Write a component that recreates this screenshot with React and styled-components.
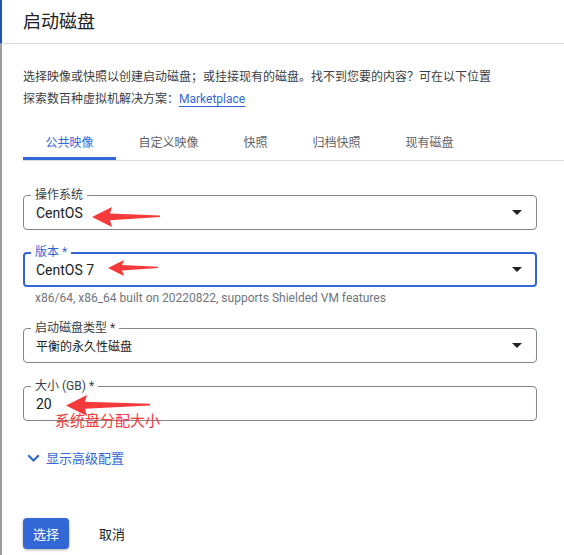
import React from 'react';
import styled, { createGlobalStyle } from 'styled-components';

const GlobalStyle = createGlobalStyle`
  body {
    margin: 0;
    background: #fff;
    font-family: Roboto, "Noto Sans CJK SC", sans-serif;
  }
`;

const tabs = ['公共映像', '自定义映像', '快照', '归档快照', '现有磁盘'];

// red hand-drawn style annotation arrow, tip on the left
const RedArrow = ({ w, h, left, top }) => (
    <ArrowBox style={{ left, top }} width={w} height={h} viewBox={`0 0 ${w} ${h}`}>
        <path
            d={`M0 ${h / 2} L${h} 0 L${h - 2} ${h * 0.32} L${w} ${h * 0.42} L${w} ${h * 0.5} L${h - 2} ${h * 0.66} L${h} ${h} Z`}
            fill="#f43a3a"
        />
    </ArrowBox>
);

const Caret = () => (
    <svg width="10" height="5" viewBox="0 0 10 5">
        <path d="M0 0 L10 0 L5 5 Z" fill="#202124" />
    </svg>
);

const App = () => {
    return (
        <>
            <GlobalStyle />
            <Page>
                <Header>启动磁盘</Header>
                <Body>
                    <Desc>
                        选择映像或快照以创建启动磁盘；或挂接现有的磁盘。找不到您要的内容？可在以下位置探索数百种虚拟机解决方案：<Link>Marketplace</Link>
                    </Desc>

                    <Tabs>
                        {tabs.map((t, i) => (
                            <Tab key={t} active={i === 0}>{t}</Tab>
                        ))}
                    </Tabs>

                    <Field>
                        <Label>操作系统</Label>
                        <Value>CentOS</Value>
                        <Caret />
                        <RedArrow w={68} h={20} left={68} top={11} />
                    </Field>

                    <Field focused>
                        <Label focused>版本 *</Label>
                        <Value>CentOS 7</Value>
                        <Caret />
                        <RedArrow w={50} h={16} left={83} top={6} />
                    </Field>
                    <Helper>x86/64, x86_64 built on 20220822, supports Shielded VM features</Helper>

                    <Field gap={23}>
                        <Label>启动磁盘类型 *</Label>
                        <Value cjk>平衡的永久性磁盘</Value>
                        <Caret />
                    </Field>

                    <Field gap={23}>
                        <Label>大小 (GB) *</Label>
                        <Value>20</Value>
                        <RedArrow w={84} h={21} left={42} top={8} />
                        <Note>系统盘分配大小</Note>
                    </Field>

                    <Advanced>
                        <svg width="13" height="8" viewBox="0 0 13 8">
                            <polyline points="1.2,1.2 6.5,6.5 11.8,1.2" fill="none" stroke="#3367d6" strokeWidth="2.2" />
                        </svg>
                        显示高级配置
                    </Advanced>

                    <Actions>
                        <PrimaryButton>选择</PrimaryButton>
                        <TextButton>取消</TextButton>
                    </Actions>
                </Body>
            </Page>
        </>
    );
};

export default App;

const Page = styled.div`
width: 564px;
height: 555px;
overflow: hidden;
display: flex;
flex-direction: column;
`;

const Header = styled.div`
height: 44px;
box-sizing: border-box;
flex-shrink: 0;
display: flex;
align-items: center;
padding: 0 0 4px 21px;
border-left: 2px solid #1a56b0;
border-bottom: 1px solid #dadce0;
font-size: 18px;
color: #202124;
`;

const Body = styled.div`
flex: 1;
border-left: 2px solid #9e9e9e;
padding: 0 27px 0 21px;
display: flex;
flex-direction: column;
`;

const Desc = styled.div`
margin-top: 22px;
max-width: 475px;
font-size: 12px;
line-height: 22px;
color: #3c4043;
`;

const Link = styled.span`
color: #3367d6;
text-decoration: underline;
text-underline-offset: 3px;
`;

const Tabs = styled.div`
display: flex;
margin-top: 13px;
margin-right: -27px;
border-bottom: 1px solid #dadce0;
`;

const Tab = styled.div`
height: 37px;
padding: 0 22.5px;
display: flex;
align-items: center;
font-size: 12px;
color: ${p => (p.active ? '#3367d6' : '#5f6368')};
box-shadow: ${p => (p.active ? 'inset 0 -3px 0 #3367d6' : 'none')};
`;

const Field = styled.div`
position: relative;
height: 35px;
box-sizing: border-box;
margin-top: ${p => (p.gap ? p.gap : p.focused ? 22 : 34)}px;
padding: 0 ${p => (p.focused ? 13 : 14)}px 0 ${p => (p.focused ? 11 : 12)}px;
border: ${p => (p.focused ? '2px solid #3367d6' : '1px solid #80868b')};
border-radius: 4px;
display: flex;
align-items: center;
justify-content: space-between;
`;

const Label = styled.span`
position: absolute;
top: ${p => (p.focused ? -9 : -8)}px;
left: ${p => (p.focused ? 6 : 7)}px;
padding: 0 4px;
background: #fff;
font-size: 12px;
line-height: 14px;
color: ${p => (p.focused ? '#3367d6' : '#3c4043')};
`;

const Value = styled.span`
font-size: ${p => (p.cjk ? 12 : 14)}px;
color: #202124;
`;

const Helper = styled.div`
margin-top: 4px;
padding-left: 12px;
font-size: 12px;
line-height: 14px;
color: #70757a;
`;

const ArrowBox = styled.svg`
position: absolute;
pointer-events: none;
`;

const Note = styled.span`
position: absolute;
left: 31px;
top: 25px;
font-size: 15px;
line-height: 18px;
color: #f43a3a;
`;

const Advanced = styled.div`
margin-top: 27px;
display: flex;
align-items: center;
gap: 6px;
padding-left: 4px;
font-size: 13px;
color: #3367d6;
`;

const Actions = styled.div`
margin-top: 51px;
display: flex;
align-items: center;
gap: 16px;
`;

const PrimaryButton = styled.button`
width: 46px;
height: 31px;
border: none;
border-radius: 4px;
background: #3367d6;
color: #fff;
font-family: inherit;
font-size: 13px;
box-shadow: 0 1px 3px rgba(0, 0, 0, 0.3);
`;

const TextButton = styled.button`
height: 31px;
padding: 0 14px;
border: none;
background: none;
color: #202124;
font-family: inherit;
font-size: 13px;
`;
